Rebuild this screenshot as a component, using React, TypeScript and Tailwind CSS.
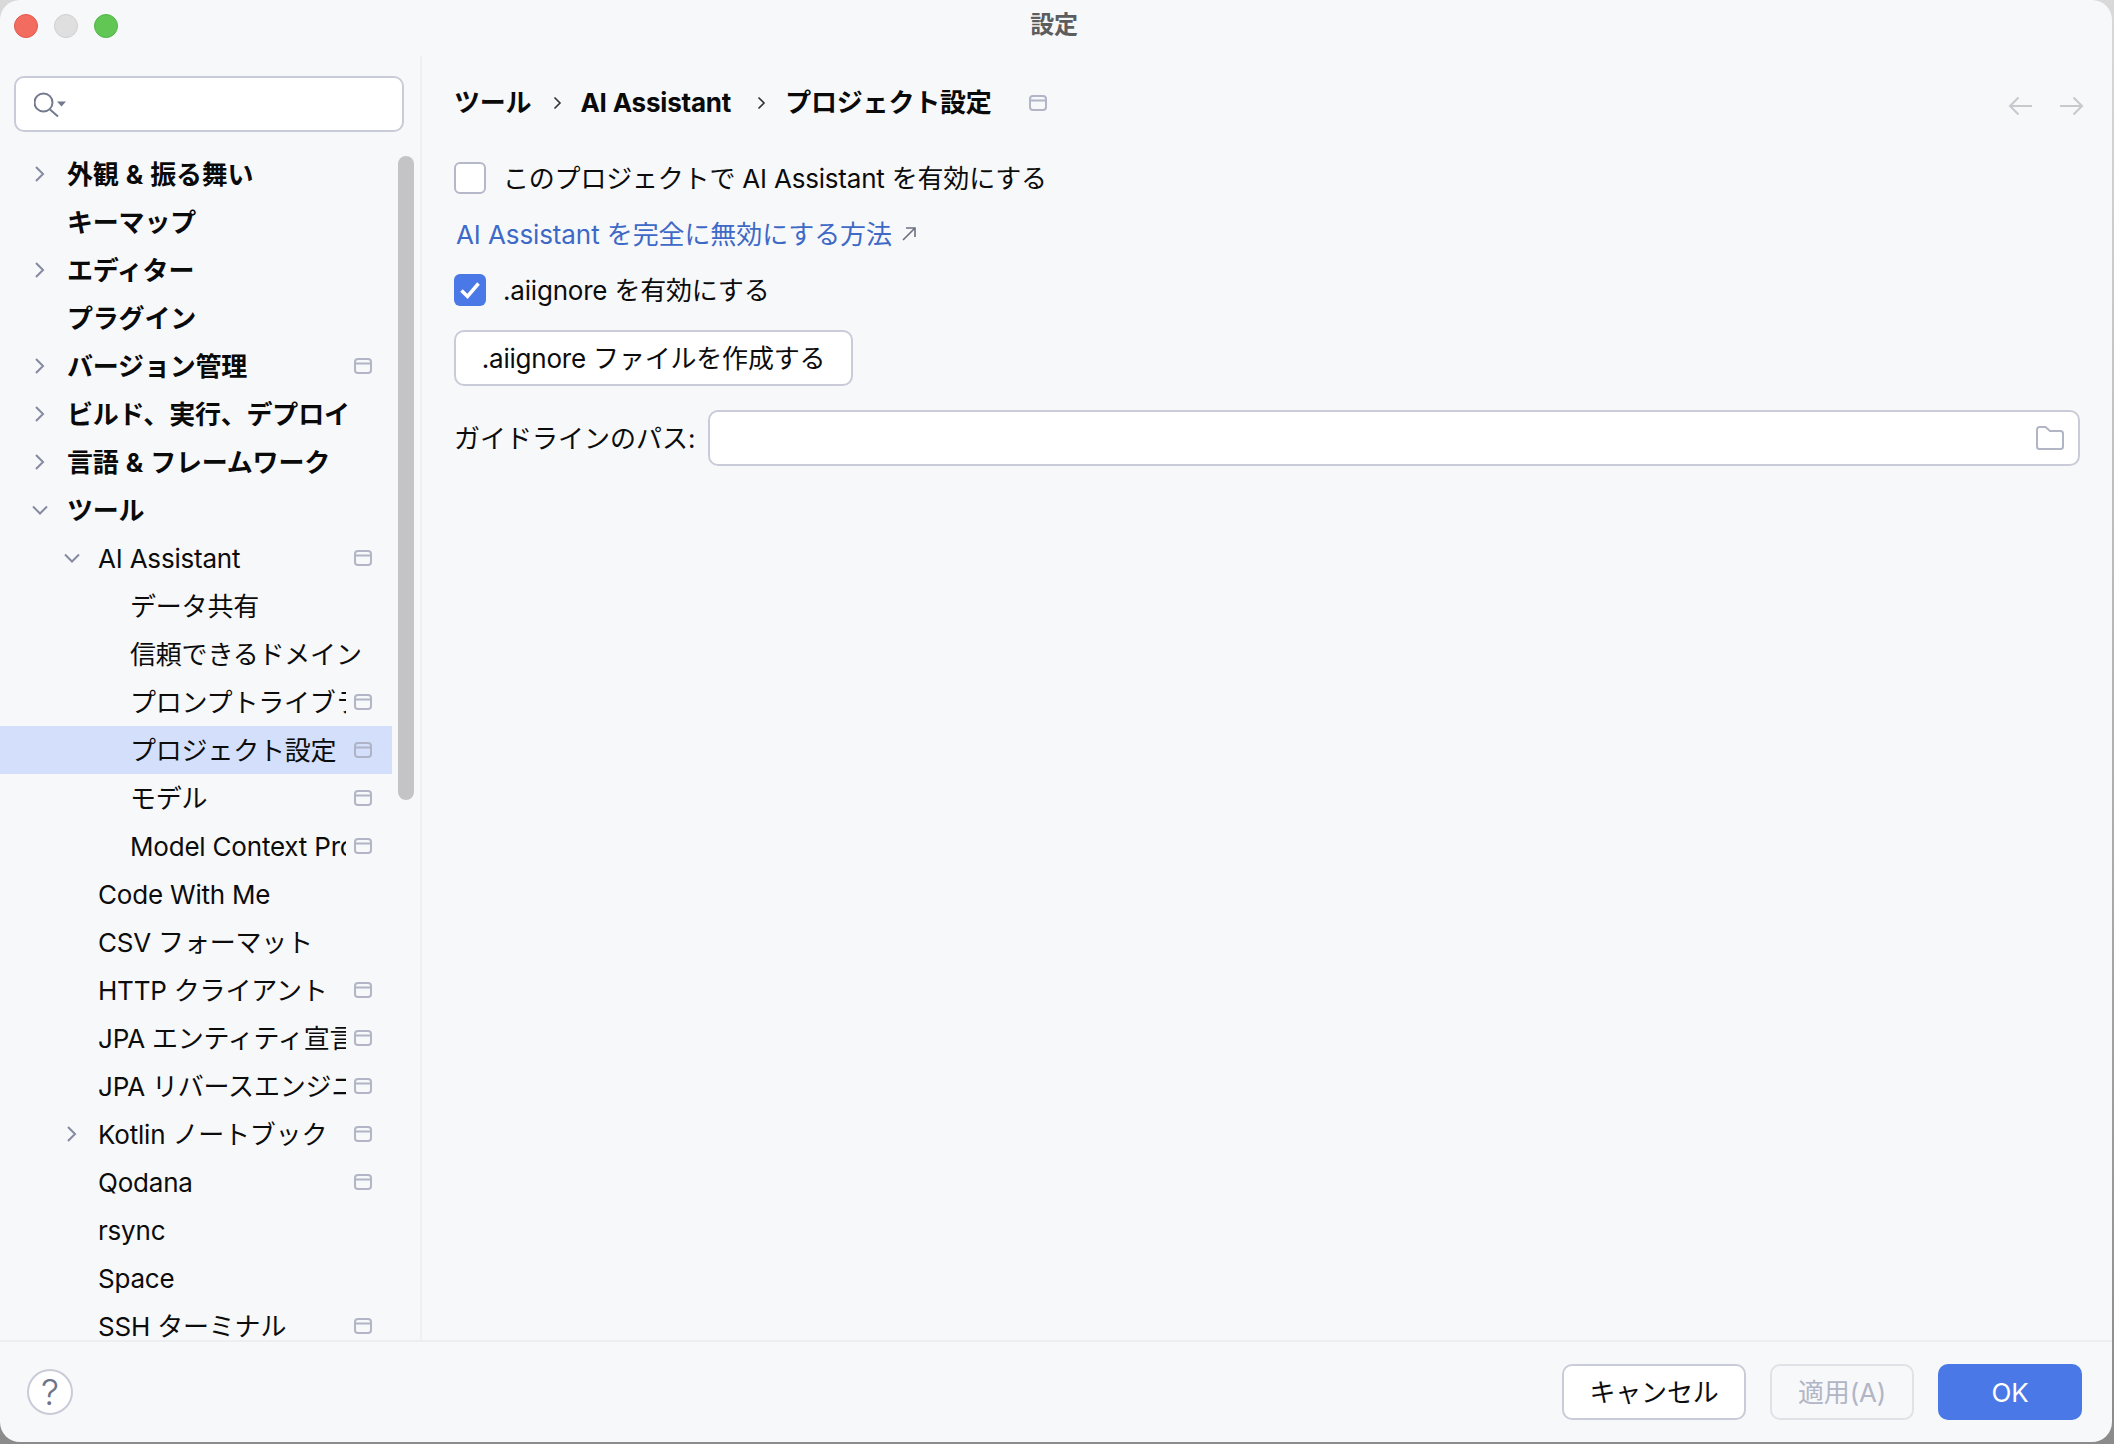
import React from "react";

const WinIcon = ({ color = "#b1b5c5" }: { color?: string }) => (
  <svg width="18" height="16" viewBox="0 0 18 16" fill="none" stroke={color} strokeWidth="2">
    <rect x="1" y="1" width="16" height="14" rx="3" />
    <path d="M1 5.5H17" />
  </svg>
);

const Chevron = ({ down = false }: { down?: boolean }) => (
  <svg width="18" height="18" viewBox="0 0 18 18" fill="none" stroke="#858aa0" strokeWidth="2">
    {down ? <path d="M2 5.5L9 12.5L16 5.5" /> : <path d="M5 2L12 9L5 16" />}
  </svg>
);

type Row = {
  label: string;
  level: 0 | 1 | 2;
  arrow?: "right" | "down";
  icon?: boolean;
  selected?: boolean;
};

const rows: Row[] = [
  { label: "外観 & 振る舞い", level: 0, arrow: "right" },
  { label: "キーマップ", level: 0 },
  { label: "エディター", level: 0, arrow: "right" },
  { label: "プラグイン", level: 0 },
  { label: "バージョン管理", level: 0, arrow: "right", icon: true },
  { label: "ビルド、実行、デプロイ", level: 0, arrow: "right" },
  { label: "言語 & フレームワーク", level: 0, arrow: "right" },
  { label: "ツール", level: 0, arrow: "down" },
  { label: "AI Assistant", level: 1, arrow: "down", icon: true },
  { label: "データ共有", level: 2 },
  { label: "信頼できるドメイン", level: 2 },
  { label: "プロンプトライブラリ", level: 2, icon: true },
  { label: "プロジェクト設定", level: 2, icon: true, selected: true },
  { label: "モデル", level: 2, icon: true },
  { label: "Model Context Protocol", level: 2, icon: true },
  { label: "Code With Me", level: 1 },
  { label: "CSV フォーマット", level: 1 },
  { label: "HTTP クライアント", level: 1, icon: true },
  { label: "JPA エンティティ宣言", level: 1, icon: true },
  { label: "JPA リバースエンジニアリング", level: 1, icon: true },
  { label: "Kotlin ノートブック", level: 1, arrow: "right", icon: true },
  { label: "Qodana", level: 1, icon: true },
  { label: "rsync", level: 1 },
  { label: "Space", level: 1 },
  { label: "SSH ターミナル", level: 1, icon: true },
];

const SideRow = ({ row }: { row: Row }) => (
  <div className={`flex h-[48px] w-[392px] shrink-0 items-center ${row.selected ? "bg-[#d4e0fb]" : ""}`}>
    <div
      className={`flex shrink-0 items-center justify-center ${
        row.level === 0
          ? "w-[67px] pl-[31px] pr-[18px]"
          : row.level === 1
            ? "w-[98px] pl-[63px] pr-[17px]"
            : "w-[130px]"
      }`}
    >
      {row.arrow && <Chevron down={row.arrow === "down"} />}
    </div>
    <div
      className={`h-[48px] whitespace-nowrap text-[26px] leading-[50px] ${
        row.level === 0 ? "font-bold text-[#0a0a0a] [word-spacing:1.2px]" : "text-[#0c0c0c]"
      } ${
        row.icon
          ? `overflow-hidden ${row.level === 0 ? "w-[279px]" : row.level === 1 ? "w-[248px]" : "w-[216px]"}`
          : ""
      }`}
    >
      {row.label}
    </div>
    {row.icon && (
      <div className="ml-[8px] flex w-[18px] shrink-0 items-center justify-center">
        <WinIcon color={row.selected ? "#aeb3c6" : "#b1b5c5"} />
      </div>
    )}
  </div>
);

export default function App() {
  return (
    <div className="h-[1444px] w-[2114px] overflow-hidden bg-[linear-gradient(to_bottom,#d9d9d9,#8b8b8b)] tracking-[-0.2px] [font-family:Inter,'Noto_Sans_CJK_JP',sans-serif]">
      <div className="relative flex h-[1442px] w-[2112px] flex-col overflow-hidden rounded-[20px] bg-[#f7f8fa]">
        <div className="relative flex h-[56px] shrink-0 items-center pb-[4px] pl-[14px]">
          <div className="flex gap-[16px]">
            <div className="h-[24px] w-[24px] rounded-full border border-[#e0574d] bg-[#f26d60]" />
            <div className="h-[24px] w-[24px] rounded-full border border-[#cfcfcf] bg-[#dfdfdf]" />
            <div className="h-[24px] w-[24px] rounded-full border border-[#52b548] bg-[#61c654]" />
          </div>
          <div className="absolute left-0 right-[4px] top-[10px] text-center text-[24px] font-semibold leading-[30px] text-[#5d5d5d]">
            設定
          </div>
        </div>

        <div className="flex min-h-0 flex-1">
          <div className="relative flex w-[422px] shrink-0 flex-col border-r-2 border-[#eff0f3]">
            <div className="ml-[14px] mt-[20px] flex h-[56px] w-[390px] shrink-0 items-center rounded-[10px] border-2 border-[#c9ccd8] bg-white pl-[18px]">
              <svg width="32" height="32" viewBox="0 0 32 32" fill="none">
                <circle cx="9.5" cy="14.5" r="9" stroke="#737a8e" strokeWidth="2" />
                <path d="M16 21.5L24 28.5" stroke="#737a8e" strokeWidth="2" />
                <path d="M23 13.5H32L27.5 18.5Z" fill="#737a8e" />
              </svg>
            </div>
            <div className="mt-[18px] flex min-h-0 flex-1 flex-col overflow-hidden">
              {rows.map((r) => (
                <SideRow key={r.label} row={r} />
              ))}
            </div>
            <div className="absolute left-[398px] top-[100px] h-[644px] w-[16px] rounded-full bg-[#c4c4c6]" />
          </div>

          <div className="flex min-w-0 flex-1 flex-col pl-[32px] pr-[32px] pt-[19px]">
            <div className="flex h-[56px] shrink-0 items-center text-[26px] font-bold leading-[56px] text-[#0a0a0a]">
              <span>ツール</span>
              <svg className="ml-[21px] mr-[18px]" width="10" height="14" viewBox="0 0 10 14" fill="none" stroke="#333" strokeWidth="1.6">
                <path d="M2.5 1.5L8 7L2.5 12.5" />
              </svg>
              <span>AI Assistant</span>
              <svg className="ml-[25px] mr-[19px]" width="10" height="14" viewBox="0 0 10 14" fill="none" stroke="#333" strokeWidth="1.6">
                <path d="M2.5 1.5L8 7L2.5 12.5" />
              </svg>
              <span>プロジェクト設定</span>
              <div className="ml-[37px] -mt-[1px] flex">
                <WinIcon />
              </div>
              <div className="-mr-[4px] ml-auto mt-[5px] flex gap-[28px]">
                <svg width="24" height="20" viewBox="0 0 24 20" fill="none" stroke="#c8c9cd" strokeWidth="2">
                  <path d="M24 10H2M10.5 1.5L2 10L10.5 18.5" />
                </svg>
                <svg width="24" height="20" viewBox="0 0 24 20" fill="none" stroke="#c8c9cd" strokeWidth="2">
                  <path d="M0 10H22M13.5 1.5L22 10L13.5 18.5" />
                </svg>
              </div>
            </div>

            <div className="mt-[31px] flex h-[32px] shrink-0 items-center text-[26px] text-[#0c0c0c]">
              <div className="h-[32px] w-[32px] rounded-[6px] border-2 border-[#b4b8c8] bg-white" />
              <span className="ml-[17px]">このプロジェクトで AI Assistant を有効にする</span>
            </div>

            <div className="mt-[24px] flex h-[32px] shrink-0 items-center pl-[2px] text-[26px] tracking-[-0.1px] text-[#3e69c6]">
              <span>AI Assistant を完全に無効にする方法</span>
              <svg className="ml-[9px]" width="16" height="16" viewBox="0 0 16 16" fill="none" stroke="#6c7080" strokeWidth="1.6">
                <path d="M2 14L14 2M5 2H14V11" />
              </svg>
            </div>

            <div className="mt-[24px] flex h-[32px] shrink-0 items-center text-[26px] text-[#0c0c0c]">
              <div className="flex h-[32px] w-[32px] items-center justify-center rounded-[6px] bg-[#4a78e6]">
                <svg width="22" height="20" viewBox="0 0 22 20" fill="none" stroke="#fff" strokeWidth="3.5">
                  <path d="M2.5 10.5L8.5 16.5L19.5 3.5" />
                </svg>
              </div>
              <span className="ml-[17px]">.aiignore を有効にする</span>
            </div>

            <div className="mt-[24px] flex h-[56px] w-[399px] shrink-0 items-center justify-center rounded-[10px] border-2 border-[#c9ccd8] bg-white text-[26px] text-[#0c0c0c]">
              .aiignore ファイルを作成する
            </div>

            <div className="mt-[24px] flex h-[56px] shrink-0 items-center text-[26px] text-[#0c0c0c]">
              <span className="w-[254px] shrink-0 tracking-normal">ガイドラインのパス:</span>
              <div className="flex h-[56px] flex-1 items-center justify-end rounded-[10px] border-2 border-[#c9ccd8] bg-white pr-[14px]">
                <svg width="28" height="24" viewBox="0 0 28 24" fill="none" stroke="#b1b5c5" strokeWidth="2">
                  <path d="M1 3.5A2.5 2.5 0 0 1 3.5 1H9.5L14 5H24.5A2.5 2.5 0 0 1 27 7.5V20.5A2.5 2.5 0 0 1 24.5 23H3.5A2.5 2.5 0 0 1 1 20.5Z" />
                </svg>
              </div>
            </div>
          </div>
        </div>

        <div className="flex h-[102px] shrink-0 items-start border-t-2 border-[#eceef1] pl-[27px] pr-[30px] pt-[22px]">
          <div className="mt-[5px] flex h-[46px] w-[46px] items-center justify-center rounded-full border-2 border-[#c9ccd8] bg-white text-[36px] font-light leading-none text-[#6e7488]">
            ?
          </div>
          <div className="ml-auto flex gap-[24px] text-[26px]">
            <div className="flex h-[56px] w-[184px] items-center justify-center rounded-[10px] border-2 border-[#c9ccd8] bg-white text-[#0c0c0c]">
              キャンセル
            </div>
            <div className="flex h-[56px] w-[144px] items-center justify-center rounded-[10px] border-2 border-[#e0e2e8] text-[#b1b5c5]">
              適用(A)
            </div>
            <div className="flex h-[56px] w-[144px] items-center justify-center rounded-[10px] bg-[#4a78e6] text-white">
              OK
            </div>
          </div>
        </div>
      </div>
    </div>
  );
}
